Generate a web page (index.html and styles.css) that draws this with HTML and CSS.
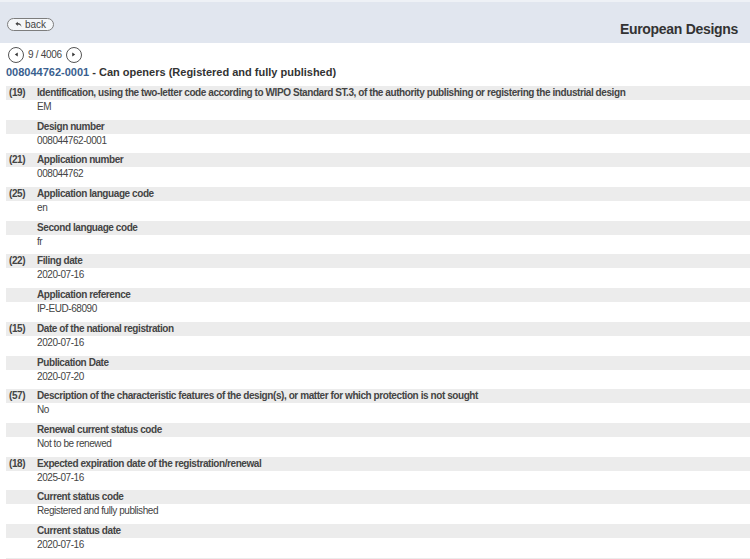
FILE: index.html
```html
<!DOCTYPE html>
<html>
<head>
<meta charset="utf-8">
<link rel="stylesheet" href="styles.css">
</head>
<body>
<header class="topbar">
  <a class="back-btn" href="#">
    <svg class="back-icon" viewBox="0 0 10 10" width="7" height="7"><path d="M4 1 L0.6 4 L4 7 L4 5 C6.5 5 8 6 9.2 8.6 C9 5.2 7 3.2 4 3 Z" fill="#444"/></svg>
    <span>back</span>
  </a>
  <h1 class="app-title">European Designs</h1>
</header>
<main class="content">
  <div class="pager">
    <span class="circle-btn"><svg viewBox="0 0 6 6" width="5" height="5"><path d="M4.5 0.5 L1 3 L4.5 5.5 Z" fill="#333"/></svg></span>
    <span class="pager-text">9 / 4006</span>
    <span class="circle-btn"><svg viewBox="0 0 6 6" width="5" height="5"><path d="M1.5 0.5 L5 3 L1.5 5.5 Z" fill="#333"/></svg></span>
  </div>
  <h2 class="record-title"><span class="record-id">008044762-0001</span> - Can openers (Registered and fully published)</h2>
  <div class="fields">
    <div class="field"><div class="label"><span class="code">(19)</span><span>Identification, using the two-letter code according to WIPO Standard ST.3, of the authority publishing or registering the industrial design</span></div><div class="value">EM</div></div>
    <div class="field"><div class="label"><span class="code"></span><span>Design number</span></div><div class="value">008044762-0001</div></div>
    <div class="field"><div class="label"><span class="code">(21)</span><span>Application number</span></div><div class="value">008044762</div></div>
    <div class="field"><div class="label"><span class="code">(25)</span><span>Application language code</span></div><div class="value">en</div></div>
    <div class="field"><div class="label"><span class="code"></span><span>Second language code</span></div><div class="value">fr</div></div>
    <div class="field"><div class="label"><span class="code">(22)</span><span>Filing date</span></div><div class="value">2020-07-16</div></div>
    <div class="field"><div class="label"><span class="code"></span><span>Application reference</span></div><div class="value">IP-EUD-68090</div></div>
    <div class="field"><div class="label"><span class="code">(15)</span><span>Date of the national registration</span></div><div class="value">2020-07-16</div></div>
    <div class="field"><div class="label"><span class="code"></span><span>Publication Date</span></div><div class="value">2020-07-20</div></div>
    <div class="field"><div class="label"><span class="code">(57)</span><span>Description of the characteristic features of the design(s), or matter for which protection is not sought</span></div><div class="value">No</div></div>
    <div class="field"><div class="label"><span class="code"></span><span>Renewal current status code</span></div><div class="value">Not to be renewed</div></div>
    <div class="field"><div class="label"><span class="code">(18)</span><span>Expected expiration date of the registration/renewal</span></div><div class="value">2025-07-16</div></div>
    <div class="field"><div class="label"><span class="code"></span><span>Current status code</span></div><div class="value">Registered and fully published</div></div>
    <div class="field"><div class="label"><span class="code"></span><span>Current status date</span></div><div class="value">2020-07-16</div></div>
    <div class="field"><div class="label"></div></div>
  </div>
</main>
</body>
</html>
```
FILE: styles.css
```css
html, body {
  margin: 0;
  padding: 0;
  background: #ffffff;
  font-family: "Liberation Sans", Arial, sans-serif;
  color: #444;
}
.topbar {
  height: 43px;
  background: #e1e6ef;
  border-top: 2px solid #eef1f6;
  box-sizing: border-box;
  display: flex;
  align-items: center;
  justify-content: space-between;
  padding: 0 12px 0 7px;
}
.back-btn {
  display: flex;
  align-items: center;
  gap: 3px;
  height: 13px;
  box-sizing: border-box;
  padding: 0 7px 0 7px;
  margin-top: 3px;
  border: 1px solid #7d7d7d;
  border-radius: 7px;
  background: #f4f6f9;
  text-decoration: none;
  color: #444;
  font-size: 10px;
  line-height: 11px;
}
.back-icon { display: block; }
.app-title {
  margin: 12px 0 0 0;
  font-size: 14px;
  letter-spacing: -0.3px;
  font-weight: bold;
  color: #333;
}
.content {
  padding: 3px 0 0 6px;
}
.pager {
  display: flex;
  align-items: center;
  gap: 4px;
  padding-left: 2px;
  height: 17px;
}
.circle-btn {
  width: 14px;
  height: 14px;
  border: 1px solid #555;
  border-radius: 50%;
  display: flex;
  align-items: center;
  justify-content: center;
  background: #fff;
}
.circle-btn svg { display: block; }
.pager-text {
  font-size: 10px;
  letter-spacing: -0.3px;
  color: #444;
}
.record-title {
  margin: 2px 0 6px 0;
  font-size: 11px;
  line-height: 15px;
  font-weight: bold;
  color: #333;
}
.record-id { color: #3a5f8f; }
.fields {
  display: flex;
  flex-direction: column;
}
.field {
  margin-bottom: 5.7px;
}
.label {
  display: flex;
  background: #ececec;
  height: 14px;
  line-height: 14px;
  font-size: 10px;
  letter-spacing: -0.42px;
  font-weight: bold;
  color: #444;
  padding-left: 3px;
  white-space: nowrap;
}
.code {
  width: 28px;
  flex: none;
}
.value {
  padding-left: 31px;
  font-size: 10px;
  letter-spacing: -0.43px;
  line-height: 14px;
  color: #444;
}
```
